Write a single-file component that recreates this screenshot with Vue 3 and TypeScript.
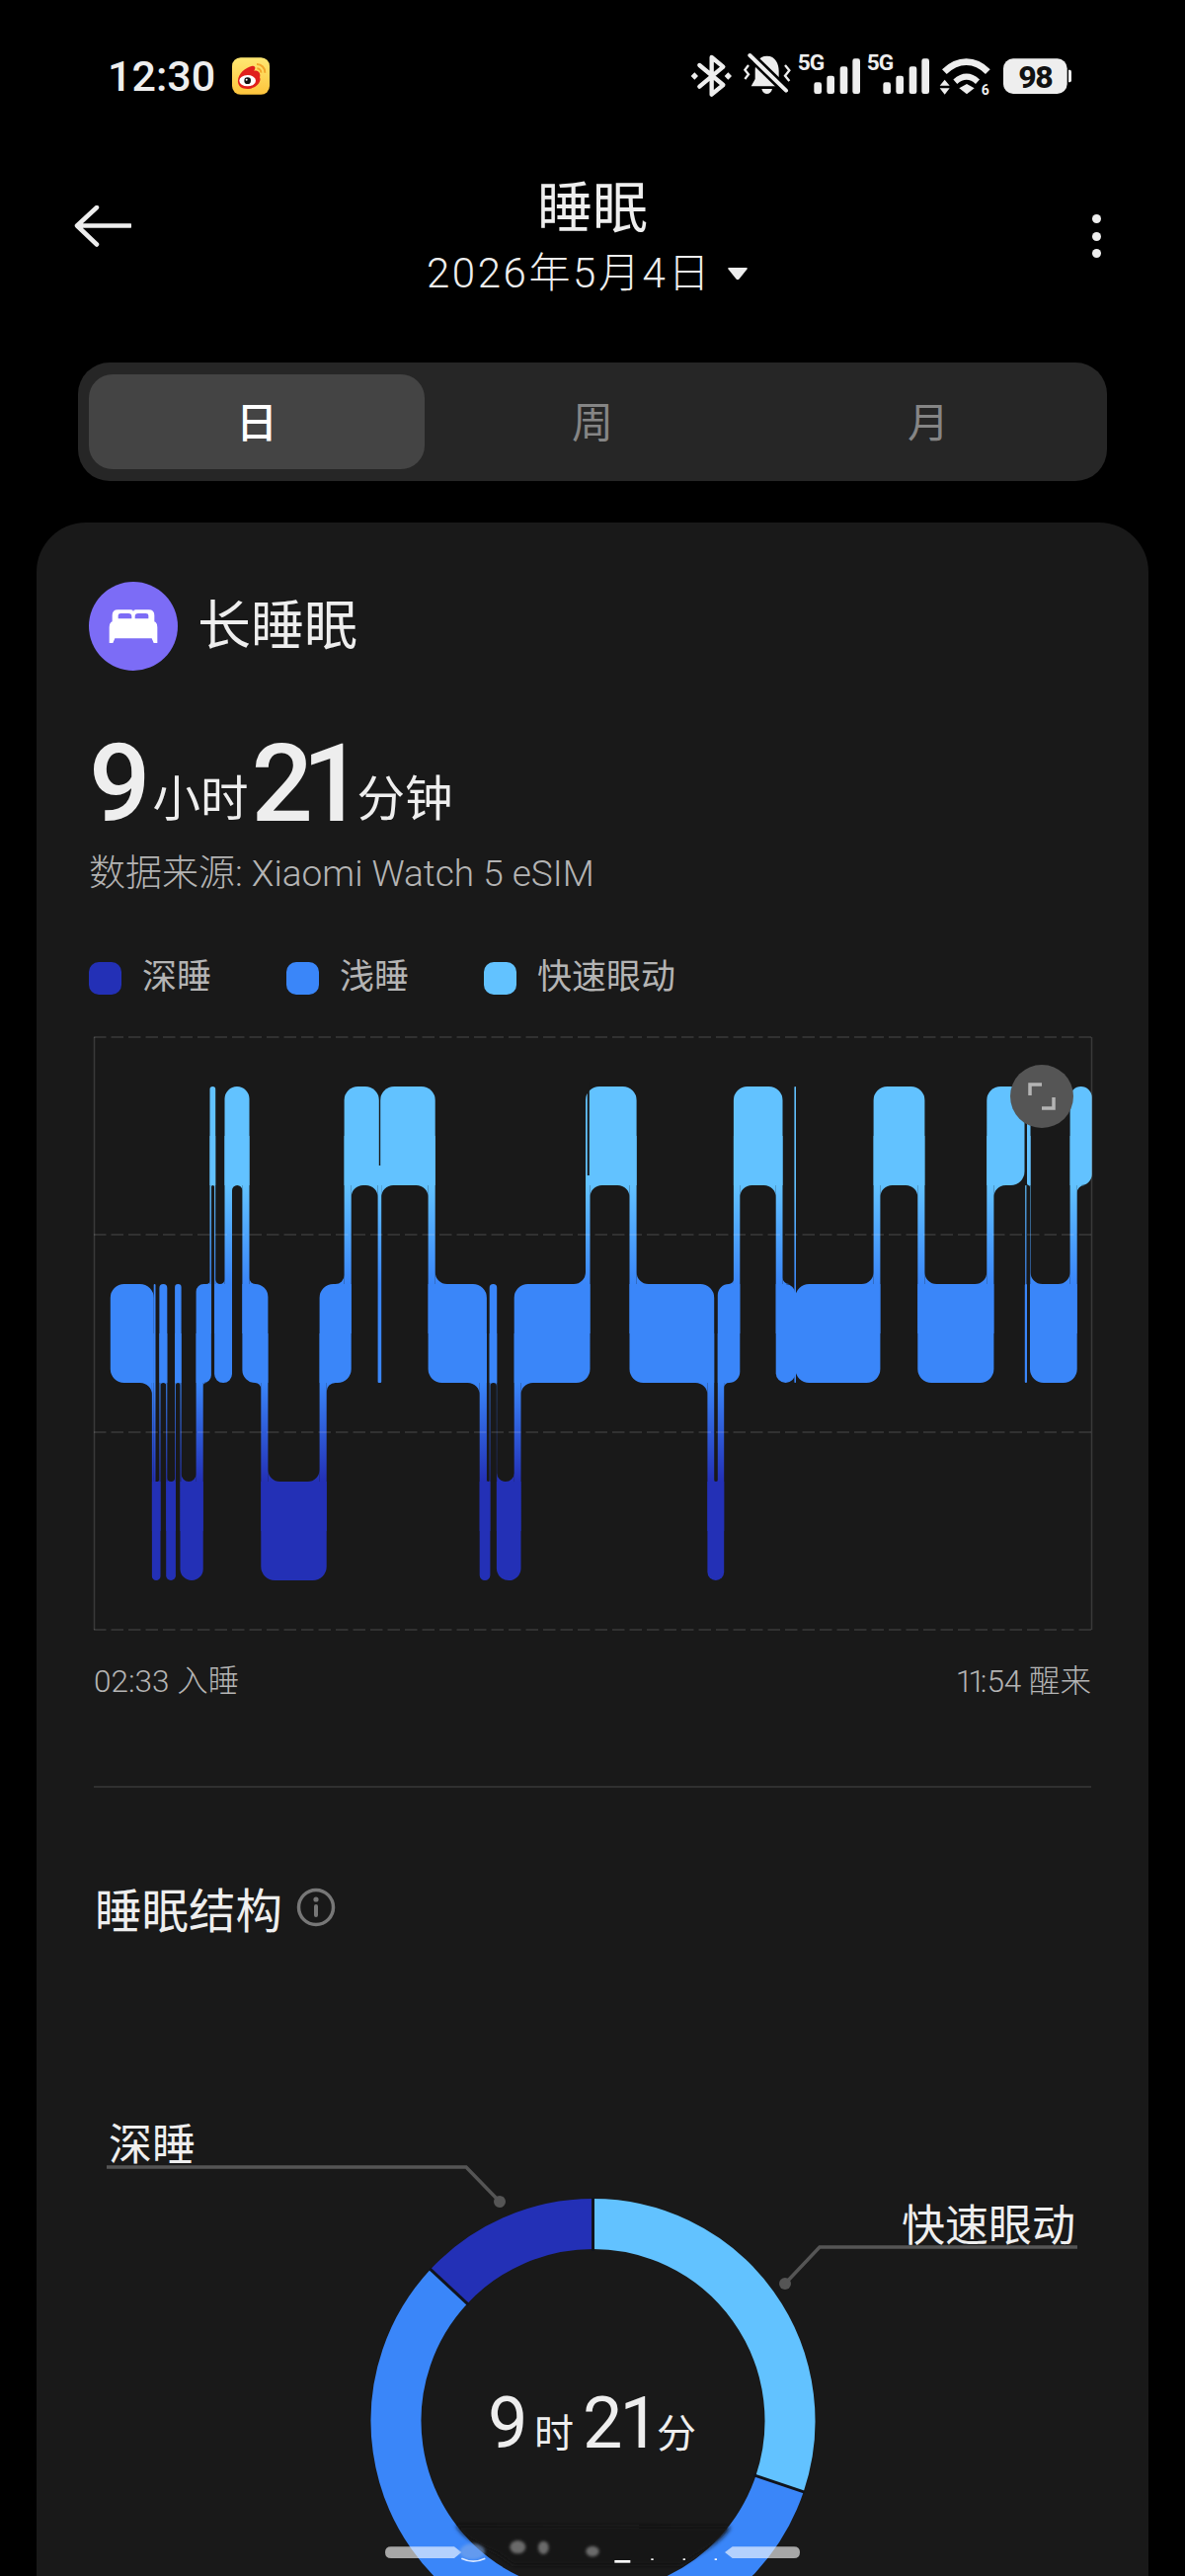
<script setup lang="ts">
type Level = 'R' | 'L' | 'D'
const bands: Record<Level, [number, number]> = { R: [1100, 1200], L: [1300, 1400], D: [1500, 1600] }
const segs: [Level, number, number][] = [
  ['L', 111.8, 155.7], ['D', 153.9, 162.5], ['L', 161.4, 169.3], ['D', 168.2, 177.9], ['L', 177.1, 183.6],
  ['D', 182.5, 205.7], ['L', 198.6, 213.9], ['R', 212.5, 218.2], ['L', 217.1, 235], ['R', 227.5, 252.5],
  ['L', 245.4, 271.4], ['D', 264.3, 330.7], ['L', 323.6, 355.7], ['R', 348.6, 383.8], ['R', 385.2, 440.7],
  ['L', 433.6, 492.9], ['D', 485.7, 496.4], ['L', 495.7, 503.2], ['D', 502.9, 527.5], ['L', 520.7, 597.5],
  ['R', 593, 644.6], ['L', 637.5, 723.2], ['D', 716.4, 733.2], ['L', 726.8, 749.3], ['R', 742.9, 792.5],
  ['L', 785.7, 805.4], ['L', 805.4, 891.4], ['R', 884.6, 936.4], ['L', 929.3, 1006.4], ['R', 999.3, 1037.5],
  ['R', 1040, 1043.5], ['L', 1043, 1090.7], ['R', 1083.6, 1105.7],
]
const slivers: [number, number, number, number][] = [
  [155.7, 157.5, 1300, 1550], [382.6, 386.2, 1180, 1400], [804.4, 806, 1100, 1400], [1037.8, 1040, 1300, 1400],
  [1038.2, 1039.4, 1200, 1320],
]
const cuts: [number, number, number, number][] = [[594.8, 596.8, 1095, 1190]]
// corners that a sliver, not a strip, joins: [segment x0, corner]
const joined: Record<string, 'bl' | 'br'> = { '348.6': 'br', '385.2': 'bl' }
const extraFillets: [number, number, number, number][] = [[382.6, 1200, -1, 1], [386.2, 1200, 1, 1]]

function box(x0: number, x1: number, y0: number, y1: number, rad: number, sq: Record<string, boolean> = {}): string {
  const r = Math.min(rad, (x1 - x0) / 2)
  const tl = sq.tl ? 0 : r
  const tr = sq.tr ? 0 : r
  const br = sq.br ? 0 : r
  const bl = sq.bl ? 0 : r
  const c = (q: number, x: number, y: number) => (q ? `A${q} ${q} 0 0 1 ${x} ${y}` : `L${x} ${y}`)
  return `M${x0} ${y0 + tl}${c(tl, x0 + tl, y0)}H${x1 - tr}${c(tr, x1, y0 + tr)}V${y1 - br}${c(br, x1 - br, y1)}H${x0 + bl}${c(bl, x0, y1 - bl)}Z`
}
function fillet(x: number, y: number, dx: number, dy: number, r: number): string {
  const sweep = dx * dy > 0 ? 1 : 0
  return `M${x + dx * r} ${y}L${x} ${y}L${x} ${y + dy * r}A${r} ${r} 0 0 ${sweep} ${x + dx * r} ${y}Z`
}
function buildChart(): string[] {
  const out: string[] = []
  const overlap = segs.map((s, i) => {
    const n = segs[i + 1]
    return n && n[0] !== s[0] ? Math.max(0, s[2] - n[1]) : 0
  })
  const room = segs.map((s, i) => (s[2] - s[1] - overlap[i] - (i > 0 ? overlap[i - 1] : 0)) / 2)
  segs.forEach((s, i) => {
    const [a0, a1] = bands[s[0]]
    const p = segs[i - 1]
    const n = segs[i + 1]
    const sq: Record<string, boolean> = {}
    if (p && overlap[i - 1] > 0) sq[bands[p[0]][0] > a0 ? 'bl' : 'tl'] = true
    if (n && overlap[i] > 0) sq[bands[n[0]][0] > a0 ? 'br' : 'tr'] = true
    const key = joined[String(s[1])]
    if (key) sq[key] = true
    out.push(box(s[1], s[2], a0, a1, 14, sq))
    if (!n || n[0] === s[0]) return
    const [b0, b1] = bands[n[0]]
    const down = b0 > a0
    const left = n[1]
    const right = s[2]
    if (right > left) {
      out.push(`M${left} ${(a0 + a1) / 2}H${right}V${(b0 + b1) / 2}H${left}Z`)
      const dy = down ? 1 : -1
      const r1 = Math.max(0, Math.min(12, room[i]))
      const r2 = Math.max(0, Math.min(12, room[i + 1]))
      if (r1 > 0) out.push(fillet(left, down ? a1 : a0, -1, dy, r1))
      if (r2 > 0) out.push(fillet(right, down ? b0 : b1, 1, -dy, r2))
    }
  })
  slivers.forEach(([x0, x1, y0, y1]) => out.push(box(x0, x1, y0, y1, 1)))
  extraFillets.forEach(([x, y, dx, dy]) => out.push(fillet(x, y, dx, dy, 12)))
  return out
}
const chartPaths = buildChart()
const gridY = [1050, 1250, 1450, 1650]

const cx = 600.5
const cy = 2450
const ringR = 199.5
function pt(deg: number, r: number): [number, number] {
  const a = (deg * Math.PI) / 180
  return [cx + r * Math.sin(a), cy - r * Math.cos(a)]
}
function arc(from: number, to: number): string {
  const [x0, y0] = pt(from, ringR)
  const [x1, y1] = pt(to, ringR)
  return `M${x0} ${y0}A${ringR} ${ringR} 0 ${to - from > 180 ? 1 : 0} 1 ${x1} ${y1}`
}
const arcs = [
  { d: arc(0, 108.6), c: '#62c2ff' },
  { d: arc(108.6, 313), c: '#3a86f9' },
  { d: arc(313, 360), c: '#2330b6' },
]
const seams = [0, 108.6, 313].map((a) => {
  const [x1, y1] = pt(a, 172)
  const [x2, y2] = pt(a, 226)
  return { x1, y1, x2, y2 }
})
const legend = [
  { name: '深睡', color: '#2330b6' },
  { name: '浅睡', color: '#3a86f9' },
  { name: '快速眼动', color: '#62c2ff' },
]
const tabs = ['日', '周', '月']
const bars = [
  { x: 493, y: 160, h: 35 }, { x: 532, y: 140, h: 55 }, { x: 572, y: 112, h: 83 }, { x: 610, y: 88, h: 107 },
]
</script>

<template>
  <div class="page">
    <div class="status">
      <div class="status-left">
        <span class="clock">12:30</span>
        <svg class="weibo" width="38" height="38" viewBox="0 0 114 112">
          <defs>
            <linearGradient id="wb" x1="0" y1="0" x2="0" y2="1">
              <stop offset="0" stop-color="#ffe873" />
              <stop offset="1" stop-color="#fdc43c" />
            </linearGradient>
          </defs>
          <rect width="114" height="112" rx="26" fill="url(#wb)" />
          <path d="M18 75C15 50 40 30 62 25C72 24 72 35 66 40C80 38 88 48 84 60C90 70 78 92 50 95C30 96 20 88 18 75Z" fill="#e0201c" />
          <ellipse cx="47" cy="70" rx="25" ry="17" fill="#fff" />
          <circle cx="47" cy="70" r="10" fill="#111" />
          <circle cx="44" cy="67" r="3" fill="#fff" />
          <path d="M75 20A25 25 0 0 1 100 46M76 33A12 12 0 0 1 88 46" fill="none" stroke="#f3a52a" stroke-width="6" />
        </svg>
      </div>
      <svg class="status-icons" width="460" height="90" viewBox="0 0 1380 270">
        <g fill="none" stroke="#eee" stroke-width="13" stroke-linejoin="round" stroke-linecap="round">
          <path d="M145 108L217 168L182 197V84L217 113L145 173" />
        </g>
        <path d="M130 130L141 141L130 152L119 141ZM232 130L243 141L232 152L221 141Z" fill="#eee" />
        <path d="M350 80C376 80 386 104 386 125V150L398 172H302L314 150V125C314 104 324 80 350 80Z" fill="#eee" />
        <path d="M334 180H366C362 200 338 200 334 180Z" fill="#eee" />
        <path d="M298 78L408 185" stroke="#000" stroke-width="28" />
        <path d="M298 78L408 185" stroke="#eee" stroke-width="12" stroke-linecap="round" />
        <path d="M294 108L283 122L294 136L283 150M405 108L418 124L405 140L418 156" fill="none" stroke="#eee" stroke-width="7" />
        <g v-for="off in [0, 210]" :key="off" :transform="`translate(${off} 0)`">
          <text x="443" y="124" class="five-g">5G</text>
          <rect v-for="b in bars" :key="b.x" :x="b.x" :y="b.y" width="23" :height="b.h" rx="7" fill="#eee" />
        </g>
        <path d="M889 128C930 88 982 88 1021 128" fill="none" stroke="#eee" stroke-width="20" />
        <path d="M922 158C945 138 968 138 990 158" fill="none" stroke="#eee" stroke-width="18" />
        <path d="M934 178L957 165L980 178L957 196Z" fill="#eee" />
        <path d="M875 170L890 152L905 170ZM875 178H905L890 197Z" fill="#eee" />
        <text x="1001" y="198" class="wifi-num">6</text>
        <rect x="1068" y="88" width="194" height="107" rx="30" fill="#eee" />
        <path d="M1266 122H1270Q1275 122 1275 128V154Q1275 160 1270 160H1266Z" fill="#eee" />
        <text x="1165" y="177" class="batt">98</text>
      </svg>
    </div>

    <header class="head">
      <svg class="back" width="58" height="42" viewBox="0 0 58 42">
        <path d="M57 20.500H3M23 2L3 20.500L23 39.500" fill="none" stroke="#eee" stroke-width="4.500" stroke-linecap="round" stroke-linejoin="round" />
      </svg>
      <div class="head-mid">
        <div class="title">睡眠</div>
        <div class="date">
          <span>2026年5月4日</span>
          <svg width="22" height="14" viewBox="0 0 22 14"><path d="M2 1H20Q21.500 1 20.500 2.500L12.500 12.500Q11 14 9.500 12.500L1.500 2.500Q.5 1 2 1Z" fill="#eee" /></svg>
        </div>
      </div>
      <div class="more"><i></i><i></i><i></i></div>
    </header>

    <div class="tabs">
      <div v-for="(t, i) in tabs" :key="t" class="tab" :class="{ on: i === 0 }">{{ t }}</div>
    </div>

    <section class="card">
      <div class="card-head">
        <svg class="bed" width="90" height="90" viewBox="15 12 270 270">
          <circle cx="150" cy="147" r="135" fill="#7c6cf6" />
          <path d="M86 132V114Q86 97 103 97H143Q150 97 150 103Q150 97 157 97H197Q214 97 214 114V132Z" fill="#fff" />
          <path d="M104 124V114Q104 108 112 108H135Q145 108 145 118V124ZM155 124V118Q155 108 165 108H188Q196 108 196 114V124Z" fill="#7c6cf6" />
          <path d="M77 198V150Q77 130 97 130H203Q223 130 223 150V198H212L206 184H94L88 198Z" fill="#fff" />
        </svg>
        <span class="card-title">长睡眠</span>
      </div>

      <div class="total"><span class="big">9</span><span class="unit">小时</span><span class="big two">21</span><span class="unit last">分钟</span></div>
      <div class="source">数据来源: Xiaomi Watch 5 eSIM</div>

      <div class="legend">
        <div v-for="l in legend" :key="l.name" class="legend-item">
          <i class="swatch" :style="{ background: l.color }"></i>
          <span>{{ l.name }}</span>
        </div>
      </div>

      <div class="chart">
        <svg class="chart-svg" width="1012" height="602" viewBox="95 1050 1012 602">
          <defs>
            <linearGradient id="sleep" gradientUnits="userSpaceOnUse" x1="0" y1="1100" x2="0" y2="1600">
              <stop offset="0.2" stop-color="#62c2ff" />
              <stop offset="0.4" stop-color="#3a86f9" />
              <stop offset="0.6" stop-color="#3a86f9" />
              <stop offset="0.8" stop-color="#2330b6" />
            </linearGradient>
          </defs>
          <path v-for="(d, i) in chartPaths" :key="i" :d="d" fill="url(#sleep)" />
          <rect v-for="c in cuts" :key="c[0]" :x="c[0]" :y="c[2]" :width="c[1] - c[0]" :height="c[3] - c[2]" fill="#191919" />
          <line v-for="y in gridY" :key="y" x1="95" :y1="y" x2="1105" :y2="y" class="grid" />
          <line x1="95.500" y1="1050" x2="95.500" y2="1650" class="edge" />
          <line x1="1105.500" y1="1050" x2="1105.500" y2="1650" class="edge" />
        </svg>
        <button class="expand">
          <svg width="28" height="28" viewBox="0 0 28 28">
            <path d="M2 13V2H14M26 15V26H14" fill="none" stroke="#b4b4b4" stroke-width="3.500" />
          </svg>
        </button>
      </div>

      <div class="times"><span>02:33 入睡</span><span><span class="ones">11</span>:54 醒来</span></div>
      <div class="rule"></div>

      <div class="section-title">
        <span>睡眠结构</span>
        <svg width="40" height="40" viewBox="0 0 40 40">
          <circle cx="20" cy="20" r="17.500" fill="none" stroke="#777" stroke-width="3.500" />
          <circle cx="20" cy="12" r="2.600" fill="#777" />
          <rect x="18" y="17" width="4" height="13" rx="2" fill="#777" />
        </svg>
      </div>

      <svg class="donut" width="1126" height="468" viewBox="37 2140 1126 468">
        <path v-for="a in arcs" :key="a.c" :d="a.d" fill="none" :stroke="a.c" stroke-width="51" />
        <line v-for="(s, i) in seams" :key="i" :x1="s.x1" :y1="s.y1" :x2="s.x2" :y2="s.y2" stroke="#10131c" stroke-width="3" />
        <path d="M108 2193H472L506 2228" fill="none" stroke="#555" stroke-width="3.500" />
        <circle cx="506" cy="2228" r="6" fill="#555" />
        <path d="M1091 2274H830L795 2311" fill="none" stroke="#555" stroke-width="3.500" />
        <circle cx="795" cy="2311" r="6" fill="#555" />
        <text x="110" y="2186" class="callout">深睡</text>
        <text x="913" y="2268" class="callout">快速眼动</text>
        <text x="494" y="2477" class="ring-num">9</text>
        <text x="541" y="2477" class="ring-unit">时</text>
        <text x="590" y="2477" class="ring-num tight">21</text>
        <text x="665" y="2477" class="ring-unit">分</text>
      </svg>
    </section>

    <svg class="nav" width="440" height="78" viewBox="0 0 1320 234">
      <defs>
        <filter id="soft" x="-10%" y="-30%" width="120%" height="160%"><feGaussianBlur stdDeviation="7" /></filter>
        <filter id="soft2" x="-30%" y="-30%" width="160%" height="160%"><feGaussianBlur stdDeviation="4" /></filter>
      </defs>
      <path d="M245 80C270 120 320 140 370 165L420 200H930L985 165C1030 140 1060 115 1080 85Z" fill="#191919" filter="url(#soft)" />
      <path d="M48 145H240L262 162L240 180H48Q30 180 30 162Q30 145 48 145Z" fill="#fff" fill-opacity=".62" />
      <path d="M1272 145H1085L1062 162L1085 180H1272Q1290 180 1290 162Q1290 145 1272 145Z" fill="#fff" fill-opacity=".62" />
      <ellipse cx="295" cy="160" rx="38" ry="24" fill="#7fa9e8" fill-opacity=".6" filter="url(#soft2)" />
      <path d="M262 181Q298 198 334 181" fill="none" stroke="#dce9ff" stroke-width="5" />
      <ellipse cx="433" cy="146" rx="24" ry="20" fill="#6a6a6a" filter="url(#soft2)" />
      <ellipse cx="511" cy="148" rx="16" ry="20" fill="#6a6a6a" filter="url(#soft2)" />
      <ellipse cx="660" cy="159" rx="20" ry="16" fill="#6a6a6a" filter="url(#soft2)" />
      <rect x="727" y="186" width="48" height="8" fill="#fff" />
      <rect x="838" y="181" width="7" height="5" fill="#fff" />
      <rect x="935" y="181" width="7" height="5" fill="#fff" />
      <rect x="1031" y="181" width="7" height="5" fill="#fff" />
    </svg>
  </div>
</template>

<style>
html, body { margin: 0; background: #000; }
</style>

<style scoped>
.page {
  position: relative;
  width: 1200px;
  height: 2608px;
  overflow: hidden;
  background: #000;
  color: #eee;
  font-family: Roboto, "Noto Sans CJK SC", sans-serif;
}
.status {
  display: flex;
  justify-content: space-between;
  align-items: flex-start;
  height: 175px;
  padding-left: 109px;
  padding-right: 80px;
  box-sizing: border-box;
}
.status-left { display: flex; align-items: center; gap: 17px; padding-top: 52px; height: 50px; }
.clock { font-size: 43px; font-weight: 500; line-height: 50px; }
.status-icons { margin-top: 30px; }
.five-g { font: 700 68px Roboto, sans-serif; letter-spacing: -3px; fill: #eee; }
.wifi-num { font: 700 42px Roboto, sans-serif; fill: #eee; }
.batt { font: 800 96px Roboto, sans-serif; letter-spacing: -4px; text-anchor: middle; fill: #111; }
.head {
  display: grid;
  grid-template-columns: 1fr auto 1fr;
  padding: 0 75px;
  height: 130px;
}
.back { margin-top: 33px; }
.head-mid { display: flex; flex-direction: column; align-items: center; }
.title { font-size: 56px; line-height: 72px; font-weight: 400; }
.date {
  display: flex;
  align-items: center;
  gap: 15px;
  margin-top: 2px;
  margin-right: 10px;
  font-size: 42px;
  line-height: 56px;
  font-weight: 300;
  letter-spacing: 2.600px;
}
.more { justify-self: end; display: flex; flex-direction: column; gap: 8.500px; margin: 42px 10px 0 0; }
.more i { display: block; width: 9px; height: 9px; border-radius: 50%; background: #eee; }
.tabs {
  display: grid;
  grid-template-columns: repeat(3, 1fr);
  margin: 62px 79px 0;
  padding: 12px 11px;
  height: 120px;
  box-sizing: border-box;
  background: #262626;
  border-radius: 32px;
}
.tab {
  display: flex;
  align-items: center;
  justify-content: center;
  padding-bottom: 5px;
  font-size: 42px;
  color: #858585;
  border-radius: 24px;
}
.tab.on { background: #444; color: #fff; font-weight: 500; }
.card {
  margin: 42px 37px 0;
  height: 2080px;
  background: #191919;
  border-radius: 50px 50px 0 0;
  overflow: hidden;
}
.card-head { display: flex; align-items: center; gap: 20px; padding: 60px 0 0 53px; }
.bed { display: block; }
.card-title { font-size: 54px; line-height: 92px; height: 90px; font-weight: 400; }
.total {
  margin-top: 60px;
  padding-left: 53px;
  height: 110px;
  line-height: 110px;
  white-space: nowrap;
}
.big { font-size: 110px; font-weight: 500; letter-spacing: -2px; }
.two { letter-spacing: -11px; margin-left: 3px; margin-right: 4px; }
.unit { font-size: 48.500px; color: #eee; margin-left: 4px; vertical-align: 5px; }
.last { margin-left: 0; }
.source {
  margin-top: 11px;
  padding-left: 53px;
  font-size: 37px;
  line-height: 50px;
  font-weight: 300;
  color: #b4b4b4;
}
.legend { display: flex; gap: 0; padding: 60px 0 0 53px; }
.legend-item { display: flex; align-items: center; gap: 21px; width: 200px; font-size: 35px; line-height: 40px; color: #b4b4b4; }
.swatch { display: block; width: 33px; height: 33px; border-radius: 10px; }
.chart { position: relative; margin: 40px 0 0 58px; width: 1012px; height: 602px; }
.chart-svg { display: block; overflow: visible; }
.grid { stroke: rgba(255, 255, 255, .14); stroke-width: 1.500; stroke-dasharray: 12.500 5; }
.edge { stroke: rgba(255, 255, 255, .14); stroke-width: 1.500; }
.expand {
  position: absolute;
  top: 28px;
  left: 928px;
  width: 64px;
  height: 64px;
  padding: 0;
  border: 0;
  border-radius: 50%;
  background: #555;
  display: flex;
  align-items: center;
  justify-content: center;
}
.times {
  display: flex;
  justify-content: space-between;
  margin: 31px 58px 0;
  font-size: 31.500px;
  line-height: 40px;
  font-weight: 300;
  color: #b4b4b4;
}
.ones { letter-spacing: -5px; }
.rule { height: 2px; margin: 85px 58px 0; background: #303030; }
.section-title {
  display: flex;
  align-items: center;
  gap: 14px;
  margin: 91px 0 0 59px;
  height: 60px;
  font-size: 47.500px;
  font-weight: 400;
}
.donut { display: block; margin-top: 180px; margin-left: 0; overflow: visible; }
.callout { font: 400 44px Roboto, "Noto Sans CJK SC", sans-serif; fill: #eee; }
.ring-num { font: 400 72px Roboto, sans-serif; fill: #eee; letter-spacing: -1px; }
.tight { letter-spacing: -3px; }
.ring-unit { font: 400 40px "Noto Sans CJK SC", sans-serif; fill: #eee; }
.nav { position: absolute; left: 380px; top: 2530px; }
</style>
